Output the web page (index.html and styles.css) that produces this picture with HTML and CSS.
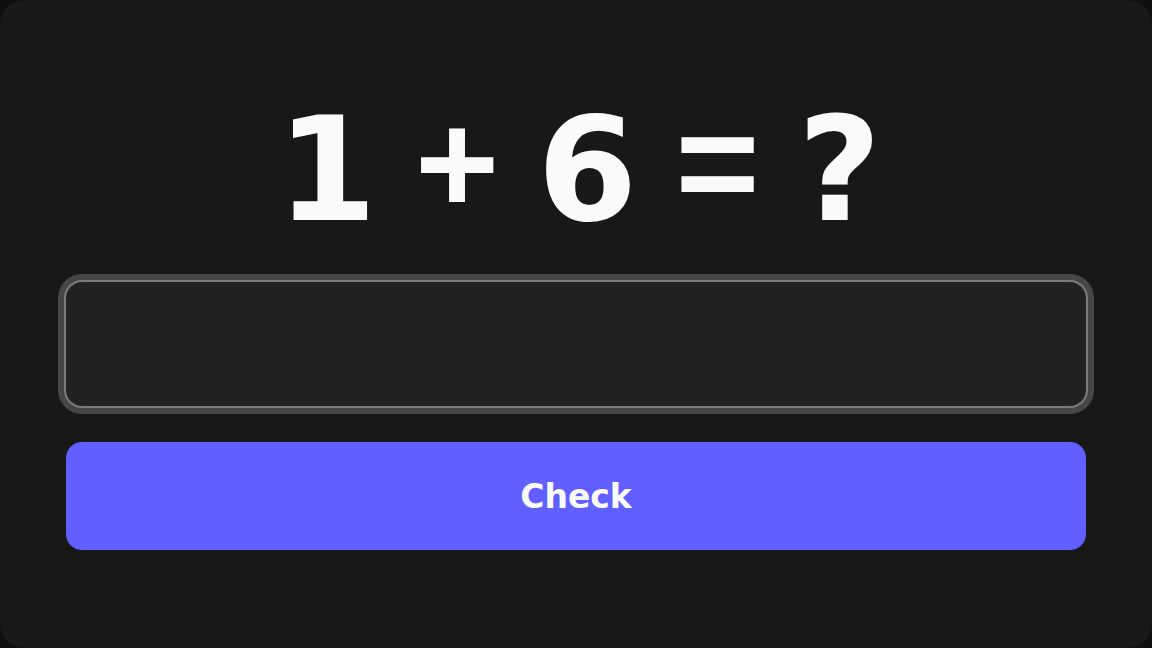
FILE: index.html
```html
<!DOCTYPE html>
<html lang="en">
<head>
  <meta charset="UTF-8">
  <meta name="viewport" content="width=device-width, initial-scale=1.0">
  <title>Quick Math</title>
  <link rel="stylesheet" href="styles.css">
</head>
<body>
  <main class="quiz-card">
    <h1 class="question">1 <span class="op">+</span> 6 <span class="op">=</span> ?</h1>
    <input class="answer" type="text" inputmode="numeric" aria-label="Answer">
    <button class="check-btn" type="button">Check</button>
  </main>
</body>
</html>
```

FILE: styles.css
```css
* {
    margin: 0;
    padding: 0;
    box-sizing: border-box;
    font-family: 'DejaVu Sans', sans-serif;
}

html, body {
    height: 100%;
}

body {
    background-color: #0e0e0e;
    color: #fafafa;
}

.quiz-card {
    height: 100%;
    display: flex;
    flex-direction: column;
    justify-content: center;
    padding: 0 66px;
    background-color: #181818;
    border-radius: 24px;
}

.question {
    font-size: 144px;
    font-weight: 700;
    line-height: 1;
    letter-spacing: -6px;
    text-align: center;
    margin-bottom: 40px;
}

/* narrower operator glyphs, lifted a little to sit on the digit midline */
.question .op {
    font-family: 'Liberation Sans', Arial, sans-serif;
    line-height: 0;
    vertical-align: 7px;
}

.answer {
    height: 124px;
    background-color: #212121;
    border: none;
    border-radius: 16px;
    outline: 2px solid #7a7a7a;
    box-shadow: 0 0 0 8px #474747;
    color: #fafafa;
    font-size: 48px;
    text-align: center;
    margin-bottom: 36px;
}

.check-btn {
    height: 108px;
    background-color: #615fff;
    color: #fafafa;
    border: none;
    border-radius: 16px;
    font-size: 33px;
    font-weight: 700;
    cursor: pointer;
}

.check-btn:hover {
    background-color: #4f4dff;
}
```
